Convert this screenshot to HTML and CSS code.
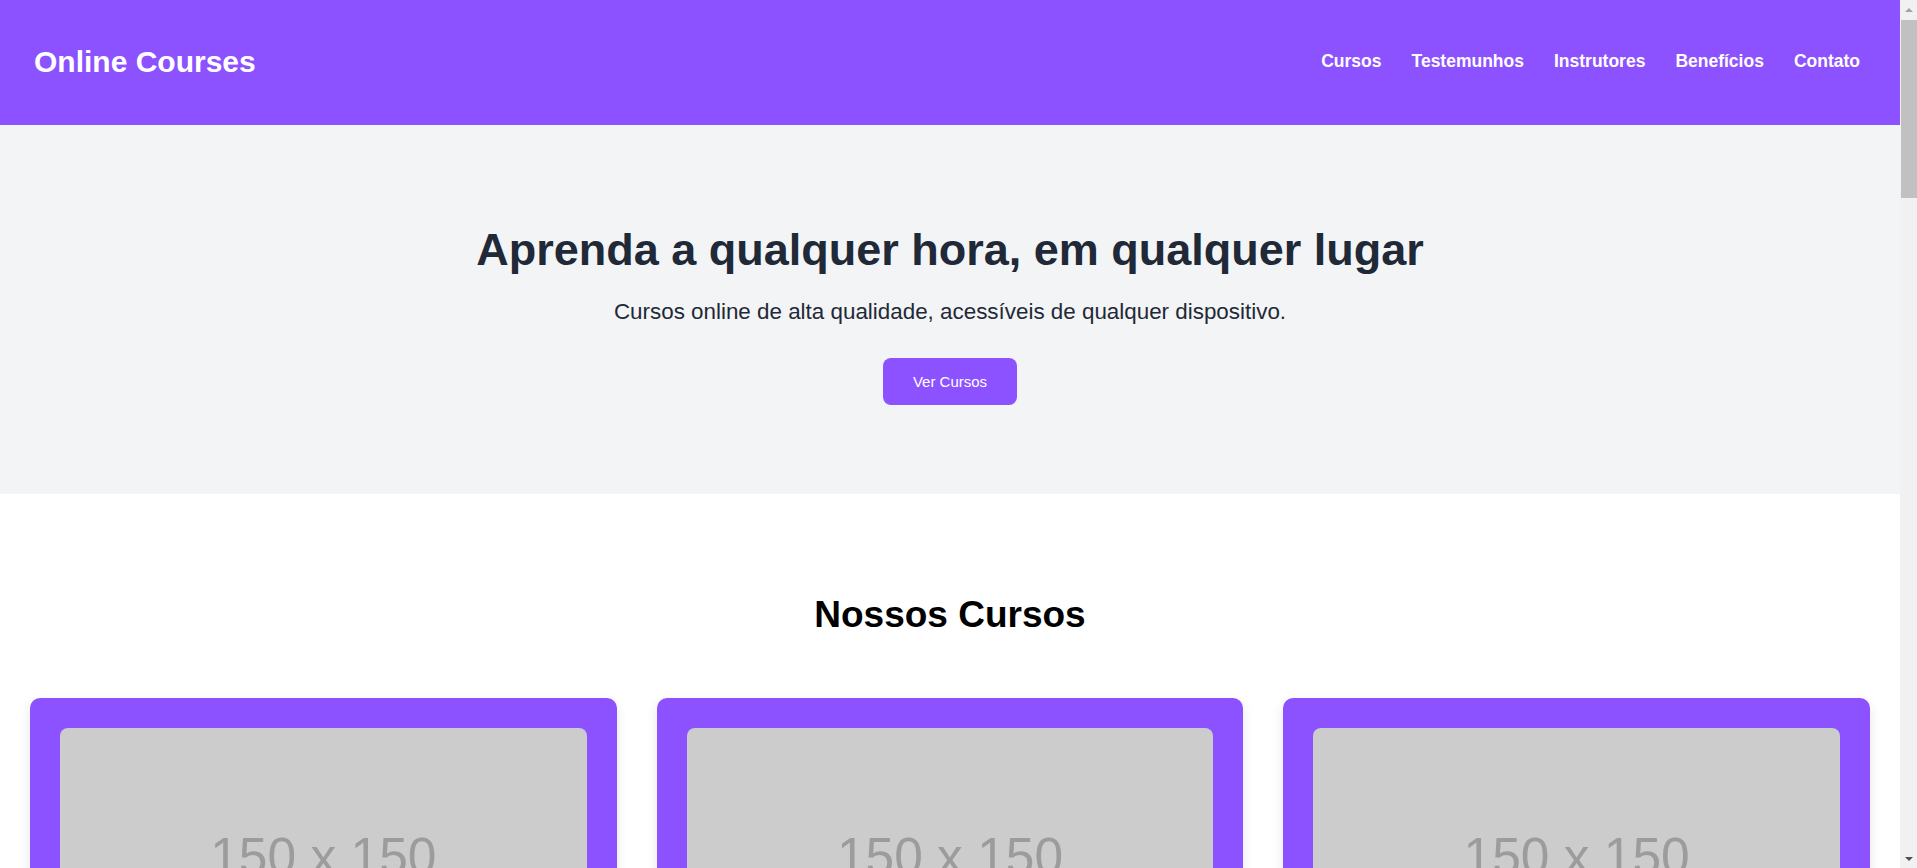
FILE: index.html
```html
<!DOCTYPE html>
<html lang="pt-BR">
<head>
<meta charset="utf-8">
<title>Online Courses</title>
<link rel="stylesheet" href="styles.css">
</head>
<body>
<header class="site-header">
  <div class="logo">Online Courses</div>
  <nav class="nav">
    <a href="#cursos">Cursos</a>
    <a href="#testemunhos">Testemunhos</a>
    <a href="#instrutores">Instrutores</a>
    <a href="#beneficios">Benefícios</a>
    <a href="#contato">Contato</a>
  </nav>
</header>

<section class="hero">
  <h1 class="hero-title">Aprenda a qualquer hora, em qualquer lugar</h1>
  <p class="hero-sub">Cursos online de alta qualidade, acessíveis de qualquer dispositivo.</p>
  <a class="btn" href="#cursos">Ver Cursos</a>
</section>

<section class="section" id="cursos">
  <h2 class="section-title">Nossos Cursos</h2>
  <div class="grid">
    <div class="card">
      <div class="thumb"><span class="thumb-text">150 x 150</span></div>
      <h3 class="card-title">Desenvolvimento Web</h3>
      <p class="card-text">Aprenda HTML, CSS e JavaScript do zero ao avançado.</p>
    </div>
    <div class="card">
      <div class="thumb"><span class="thumb-text">150 x 150</span></div>
      <h3 class="card-title">Design Gráfico</h3>
      <p class="card-text">Domine as ferramentas e técnicas de design.</p>
    </div>
    <div class="card">
      <div class="thumb"><span class="thumb-text">150 x 150</span></div>
      <h3 class="card-title">Marketing Digital</h3>
      <p class="card-text">Estratégias para crescer sua presença online.</p>
    </div>
  </div>
</section>

<section class="section alt" id="testemunhos">
  <h2 class="section-title">Testemunhos</h2>
  <div class="grid">
    <blockquote class="quote">"Os cursos mudaram minha carreira!" — Ana</blockquote>
    <blockquote class="quote">"Conteúdo excelente e instrutores atenciosos." — Bruno</blockquote>
    <blockquote class="quote">"Aprendi no meu ritmo, de qualquer lugar." — Carla</blockquote>
  </div>
</section>

<section class="section" id="instrutores">
  <h2 class="section-title">Instrutores</h2>
  <div class="grid">
    <div class="card"><div class="thumb"><span class="thumb-text">150 x 150</span></div><h3 class="card-title">João Silva</h3></div>
    <div class="card"><div class="thumb"><span class="thumb-text">150 x 150</span></div><h3 class="card-title">Maria Souza</h3></div>
    <div class="card"><div class="thumb"><span class="thumb-text">150 x 150</span></div><h3 class="card-title">Pedro Lima</h3></div>
  </div>
</section>

<section class="section alt" id="beneficios">
  <h2 class="section-title">Benefícios</h2>
  <div class="grid">
    <div class="benefit">Acesso vitalício</div>
    <div class="benefit">Certificado de conclusão</div>
    <div class="benefit">Suporte dos instrutores</div>
  </div>
</section>

<section class="section" id="contato">
  <h2 class="section-title">Contato</h2>
  <form class="form">
    <input class="field" type="text" placeholder="Nome">
    <input class="field" type="email" placeholder="E-mail">
    <textarea class="field area" placeholder="Mensagem"></textarea>
    <button class="btn" type="button">Enviar</button>
  </form>
</section>

<footer class="footer">© 2024 Online Courses. Todos os direitos reservados.</footer>

<div class="scrollbar" aria-hidden="true">
  <div class="sb-btn"><span class="arrow-up"></span></div>
  <div class="sb-track"><div class="sb-thumb"></div></div>
  <div class="sb-btn"><span class="arrow-down"></span></div>
</div>
</body>
</html>
```

FILE: styles.css
```css
* { box-sizing: border-box; }
html, body { margin: 0; padding: 0; }
body {
  font-family: "Liberation Sans", Arial, sans-serif;
  background: #ffffff;
  color: #000;
  margin-right: 17px;
}

/* simulated classic scrollbar (browser chrome overlay) */
.scrollbar {
  position: fixed;
  top: 0;
  right: 0;
  width: 17px;
  height: 100vh;
  background: #f1f1f1;
  display: flex;
  flex-direction: column;
}
.sb-btn {
  height: 17px;
  flex: none;
  display: flex;
  align-items: center;
  justify-content: center;
}
.arrow-up {
  width: 0;
  height: 0;
  border-left: 4px solid transparent;
  border-right: 4px solid transparent;
  border-bottom: 4px solid #a3a3a3;
  margin-top: 3px;
}
.arrow-down {
  width: 0;
  height: 0;
  border-left: 4px solid transparent;
  border-right: 4px solid transparent;
  border-top: 4px solid #505050;
  margin-bottom: 2px;
}
.sb-track {
  flex: 1;
  padding: 3px 0 0 1px;
}
.sb-thumb {
  height: 178px;
  background: #c1c1c1;
}

.site-header {
  height: 125px;
  background: #8c52ff;
  display: flex;
  align-items: center;
  justify-content: space-between;
  padding: 0 40px 2px 34px;
}
.logo {
  color: #fff;
  font-size: 30px;
  font-weight: 700;
}
.nav {
  display: flex;
  gap: 30px;
}
.nav a {
  color: #fff;
  text-decoration: none;
  font-weight: 700;
  font-size: 17.5px;
}

.hero {
  background: #f3f4f6;
  text-align: center;
  padding: 99px 20px 89px;
  display: flex;
  flex-direction: column;
  align-items: center;
}
.hero-title {
  margin: 0;
  font-size: 45px;
  font-weight: 700;
  color: #1f2937;
}
.hero-sub {
  margin: 23px 0 0;
  font-size: 22.4px;
  color: #1f2937;
}
.btn {
  display: inline-block;
  margin-top: 33px;
  background: #8c52ff;
  color: #fff;
  text-decoration: none;
  font-family: "Liberation Sans", Arial, sans-serif;
  font-size: 15px;
  padding: 15px 30px;
  border: none;
  border-radius: 8px;
}

.section {
  padding: 100px 30px;
}
.section.alt { background: #f3f4f6; }
.section-title {
  margin: 0 0 62px;
  text-align: center;
  font-size: 37px;
  font-weight: 700;
  color: #000;
}
.grid {
  display: grid;
  grid-template-columns: repeat(3, 1fr);
  gap: 40px;
}
.card {
  background: #8c52ff;
  border-radius: 10px;
  padding: 30px;
  box-shadow: 0 4px 12px rgba(0, 0, 0, 0.1);
  color: #fff;
}
.thumb {
  height: 256px;
  background: #cccccc;
  border-radius: 8px;
  display: flex;
  align-items: center;
  justify-content: center;
}
.thumb-text {
  font-size: 51.5px;
  color: #9c9c9c;
  filter: blur(0.6px);
}
.card-title {
  margin: 24px 0 12px;
  font-size: 24px;
}
.card-text {
  margin: 0;
  font-size: 17px;
  line-height: 1.5;
}

.quote {
  margin: 0;
  background: #fff;
  border-radius: 10px;
  padding: 40px 30px;
  min-height: 200px;
  font-size: 20px;
  box-shadow: 0 4px 12px rgba(0, 0, 0, 0.1);
}
.benefit {
  background: #fff;
  border-radius: 10px;
  padding: 40px 30px;
  min-height: 160px;
  font-size: 22px;
  font-weight: 700;
  text-align: center;
  box-shadow: 0 4px 12px rgba(0, 0, 0, 0.1);
}
.form {
  max-width: 700px;
  margin: 0 auto;
  display: flex;
  flex-direction: column;
  gap: 20px;
  align-items: stretch;
}
.field {
  font-family: "Liberation Sans", Arial, sans-serif;
  font-size: 17px;
  padding: 14px;
  border: 1px solid #ccc;
  border-radius: 8px;
}
.area { height: 160px; }
.form .btn { align-self: center; }
.footer {
  background: #8c52ff;
  color: #fff;
  text-align: center;
  padding: 40px 20px;
  font-size: 16px;
}
```
